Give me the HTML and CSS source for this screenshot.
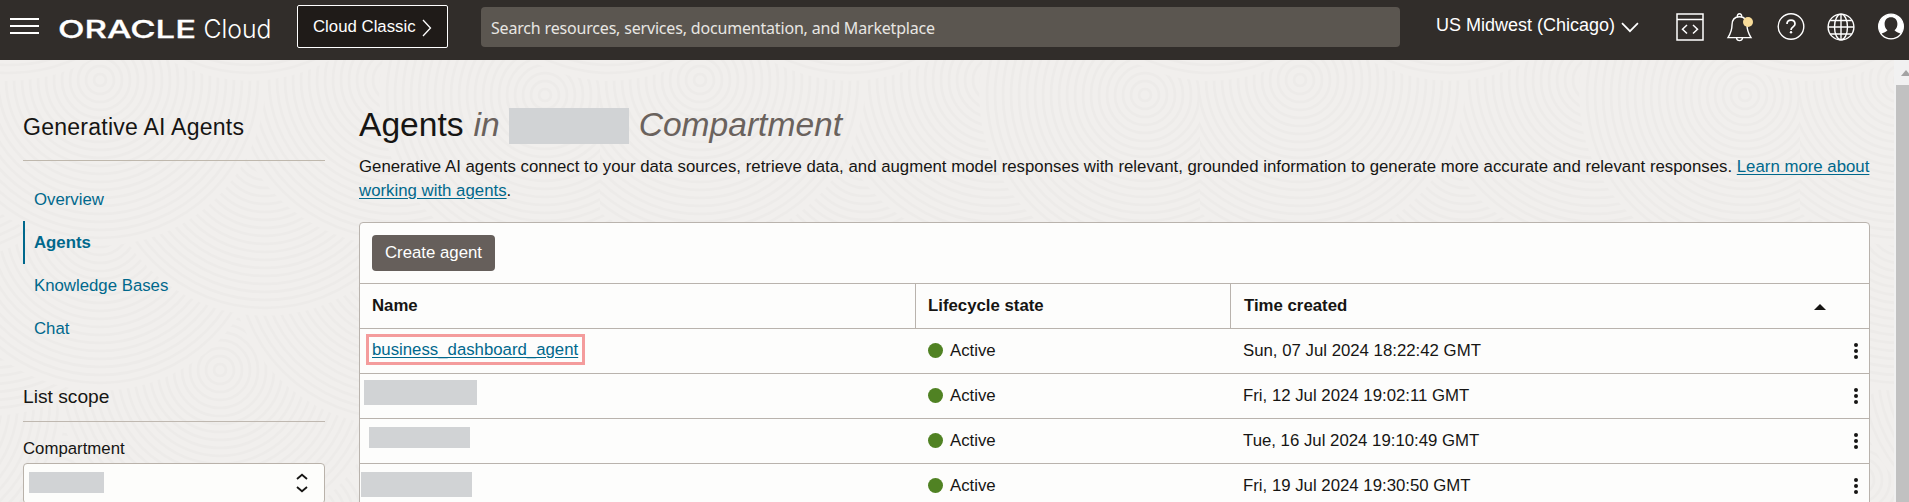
FILE: index.html
```html
<!DOCTYPE html>
<html lang="en">
<head>
<meta charset="utf-8">
<title>Generative AI Agents</title>
<link rel="stylesheet" href="styles.css">
</head>
<body>
<header class="topbar">
  <svg class="menu" width="29" height="16" viewBox="0 0 29 16"><path d="M0 1h29M0 8h29M0 15h29" stroke="#fff" stroke-width="2"/></svg>
  <svg class="logo" width="214" height="30" viewBox="0 0 214 30">
    <text class="logo-brand" x="1" y="23" textLength="138" lengthAdjust="spacingAndGlyphs">ORACLE</text>
    <text class="logo-product" x="146.500" y="23" textLength="68" lengthAdjust="spacingAndGlyphs">Cloud</text>
  </svg>
  <button class="classic">Cloud Classic
    <svg width="10" height="18" viewBox="0 0 10 18"><path d="M1 1l7.500 8L1 17" fill="none" stroke="#fff" stroke-width="1.3"/></svg>
  </button>
  <div class="search">Search resources, services, documentation, and Marketplace</div>
  <div class="region">US Midwest (Chicago)
    <svg width="18" height="11" viewBox="0 0 18 11"><path d="M1 1.200l8 8 8-8" fill="none" stroke="#fff" stroke-width="1.7"/></svg>
  </div>
  <div class="tools">
    <svg width="28" height="30" viewBox="0 0 28 30" fill="none" stroke="#fff" stroke-width="1.5"><path d="M1 2h26v26H1zM1 7.500h26M11 13l-4.500 4.200L11 21.500M17 13l4.500 4.200L17 21.500"/></svg>
    <svg width="28" height="30" viewBox="0 0 28 30" fill="none" stroke="#fff" stroke-width="1.4"><path d="M2 25.600c2.700-4.200 4-7 4-12.500C6 8 8.500 4.700 13.500 4.700S21 8 21 13.100c0 5.500 1.300 8.300 4 12.500zM11.400 4.800c-.7-4 4.900-4 4.200 0M10.500 26c.6 3.500 5.400 3.500 6 0"/><circle cx="22" cy="10" r="5" fill="#f8dc99" stroke="none"/></svg>
    <svg width="28" height="30" viewBox="0 0 28 30" fill="none" stroke="#fff" stroke-width="1.400"><circle cx="14" cy="14.500" r="12.800"/><path d="M10 12c0-5.300 8-5.300 8 0 0 3-4 2.800-4 6" stroke-width="1.700"/><circle cx="14" cy="20.300" r="1.200" fill="#fff" stroke="none"/></svg>
    <svg width="28" height="30" viewBox="0 0 28 30" fill="none" stroke="#fff" stroke-width="1.400"><circle cx="14" cy="15" r="12.900"/><ellipse cx="14" cy="15" rx="6.500" ry="12.900"/><path d="M14 2v26M1 15h26M3.200 8.500h21.600M3.200 22h21.600"/></svg>
    <svg width="28" height="30" viewBox="0 0 28 30"><circle cx="14" cy="14.500" r="12.300" fill="#fff"/><path d="M3.500 22.500c2.200-1.800 5.500-2.200 7-4.200C8.500 16.800 7.600 14.500 7.600 12c0-4 2.600-6.700 6.400-6.700s6.400 2.700 6.400 6.700c0 2.500-.9 4.800-2.900 6.300 1.500 2 4.800 2.400 7 4.200-5.600 5.300-15.400 5.300-21 0z" fill="#312d2a"/><circle cx="14" cy="14.500" r="12.400" fill="none" stroke="#fff" stroke-width="1.200"/></svg>
  </div>
</header>

<div class="page">
  <svg class="texture" width="1896" height="442">
    <defs>
      <g id="rings">
        <circle r="166" class="disc"/>
        <circle r="158"/><circle r="150"/><circle r="142"/><circle r="134"/><circle r="126"/><circle r="118"/><circle r="110"/><circle r="102"/><circle r="94"/><circle r="86"/><circle r="78"/><circle r="70"/><circle r="62"/><circle r="54"/><circle r="46"/><circle r="38"/><circle r="30"/><circle r="22"/><circle r="14"/><circle r="6"/>
      </g>
      <pattern id="swirl" width="600" height="500" patternUnits="userSpaceOnUse" class="ring-lines">
        <use href="#rings" x="60" y="420"/><use href="#rings" x="660" y="420"/>
        <use href="#rings" x="300" y="460"/>
        <use href="#rings" x="500" y="340"/><use href="#rings" x="-100" y="340"/>
        <use href="#rings" x="220" y="310"/>
        <use href="#rings" x="395" y="200"/>
        <use href="#rings" x="-10" y="190"/><use href="#rings" x="590" y="190"/>
        <use href="#rings" x="100" y="165"/>
        <use href="#rings" x="265" y="90"/>
        <use href="#rings" x="395" y="20"/>
        <use href="#rings" x="545" y="35"/><use href="#rings" x="-55" y="35"/>
        <use href="#rings" x="100" y="20"/>
        <use href="#rings" x="250" y="-145"/>
        <use href="#rings" x="10" y="-145"/><use href="#rings" x="610" y="-145"/>
      </pattern>
    </defs>
    <rect width="1896" height="442" fill="url(#swirl)"/>
  </svg>

  <aside class="sidebar">
    <h2 class="service">Generative AI Agents</h2>
    <nav class="nav">
      <a class="nav-item">Overview</a>
      <a class="nav-item nav-current">Agents</a>
      <a class="nav-item">Knowledge Bases</a>
      <a class="nav-item">Chat</a>
    </nav>
    <h3 class="scope">List scope</h3>
    <div class="label">Compartment</div>
    <div class="select">
      <span class="masked masked-select"></span>
      <svg width="12" height="20" viewBox="0 0 12 20"><path d="M1 6l5-4.300L11 6M1 14l5 4.300L11 14" fill="none" stroke="#161513" stroke-width="1.800"/></svg>
    </div>
  </aside>

  <main class="main">
    <h1 class="title"><span>Agents</span> <i>in</i> <span class="masked masked-title"></span> <i>Compartment</i></h1>
    <p class="intro">Generative AI agents connect to your data sources, retrieve data, and augment model responses with relevant, grounded information to generate more accurate and relevant responses. <a class="link">Learn more about<br>working with agents</a>.</p>
    <section class="table">
      <div class="actions"><button class="create">Create agent</button></div>
      <div class="row head">
        <div class="cell">Name</div>
        <div class="cell">Lifecycle state</div>
        <div class="cell">Time created <svg class="sort" width="12" height="6" viewBox="0 0 12 6"><path d="M0 6l6-6 6 6z" fill="#161513"/></svg></div>
      </div>
      <div class="row">
        <div class="cell"><span class="callout"><a class="link">business_dashboard_agent</a></span></div>
        <div class="cell"><span class="dot"></span>Active</div>
        <div class="cell">Sun, 07 Jul 2024 18:22:42 GMT <span class="kebab"><b></b><b></b><b></b></span></div>
      </div>
      <div class="row">
        <div class="cell"><span class="masked masked-a"></span></div>
        <div class="cell"><span class="dot"></span>Active</div>
        <div class="cell">Fri, 12 Jul 2024 19:02:11 GMT <span class="kebab"><b></b><b></b><b></b></span></div>
      </div>
      <div class="row">
        <div class="cell"><span class="masked masked-b"></span></div>
        <div class="cell"><span class="dot"></span>Active</div>
        <div class="cell">Tue, 16 Jul 2024 19:10:49 GMT <span class="kebab"><b></b><b></b><b></b></span></div>
      </div>
      <div class="row">
        <div class="cell"><span class="masked masked-c"></span></div>
        <div class="cell"><span class="dot"></span>Active</div>
        <div class="cell">Fri, 19 Jul 2024 19:30:50 GMT <span class="kebab"><b></b><b></b><b></b></span></div>
      </div>
    </section>
  </main>

  <div class="scrollbar">
    <div class="scroll-up"><svg width="10" height="6" viewBox="0 0 10 6"><path d="M0 6l5-6 5 6z" fill="#a3a3a3"/></svg></div>
    <div class="scroll-thumb"></div>
  </div>
</div>
</body>
</html>
```
FILE: styles.css
```css
* { box-sizing: border-box; }
html { height: 502px; overflow: hidden; }
body {
  margin: 0;
  height: 502px;
  overflow: hidden;
  display: flex;
  flex-direction: column;
  font: 16.8px/24px "Liberation Sans", Arial, sans-serif;
  color: #161513;
  background: #f1efed;
}
h1, h2, h3, p { margin: 0; font-weight: 400; }
button { font: inherit; color: #fff; }

.topbar {
  flex: none;
  height: 60px;
  display: flex;
  align-items: flex-start;
  padding-left: 10px;
  background: #312d2a;
  color: #fff;
  white-space: nowrap;
  overflow: hidden;
}
.topbar > *, .tools svg { flex: none; }
.menu { margin-top: 18px; }
.logo { margin: 15px 0 0 18px; fill: #fff; overflow: visible; }
.logo-brand { font: 500 24.500px Inter, sans-serif; stroke: #fff; stroke-width: .3; }
.logo-product { font: 300 25px Inter, sans-serif; }
.classic {
  display: flex;
  align-items: center;
  justify-content: space-between;
  width: 151px;
  height: 43px;
  margin: 5px 0 0 26px;
  padding: 1px 15px 0;
  border: 1px solid #fff;
  border-radius: 2px;
  background: #1f1b18;
}
.classic svg { margin-top: 1px; }
.search {
  width: 919px;
  height: 40px;
  margin: 7px 0 0 33px;
  padding-left: 10px;
  border-radius: 4px;
  background: #5b5650;
  color: #e8e6e3;
  font: 16px/43px "Noto Sans", sans-serif;
  letter-spacing: -.18px;
}
.region {
  display: flex;
  align-items: center;
  gap: 6px;
  width: 203px;
  margin: 13px 0 0 36px;
  font-size: 18px;
}
.region svg { margin-top: 5px; }
.tools { display: flex; gap: 22.300px; margin: 12px 0 0 37px; }

.page { position: relative; z-index: 0; flex: 1; min-height: 0; display: flex; overflow: hidden; }
.texture { position: absolute; top: 0; left: 0; z-index: -1; }
.ring-lines { fill: none; stroke: #edebe9; stroke-width: 2.500; }
.disc { fill: #f1efed; stroke: none; }

.sidebar { flex: none; width: 302px; margin-left: 23px; }
.service {
  height: 101px;
  padding-top: 55px;
  border-bottom: 1px solid #bfb8ad;
  font-size: 23.040px;
  letter-spacing: .24px;
}
.nav { display: flex; flex-direction: column; padding-top: 17px; }
.nav-item { height: 43px; padding-left: 11px; line-height: 43px; color: #00688c; }
.nav-current { padding-left: 9px; border-left: 2px solid #00688c; font-weight: 700; }
.scope {
  height: 72px;
  padding-top: 35px;
  border-bottom: 1px solid #bfb8b0;
  font-size: 19.200px;
}
.label { padding-top: 15px; height: 41px; }
.select {
  display: flex;
  align-items: flex-start;
  justify-content: space-between;
  height: 41px;
  padding: 8px 16px 0 5px;
  border: 1px solid #b9b2aa;
  border-radius: 4px;
  background: #fdfdfb;
}
.select svg { margin-top: 1px; }

.masked { display: inline-block; flex: none; background: #d1d3d5; }
.masked-select { width: 75px; height: 21px; }
.masked-title { width: 120px; height: 36px; }
.masked-a { width: 113px; height: 25px; margin: -7px 0 0 -8px; }
.masked-b { width: 101px; height: 21px; margin: -7px 0 0 -3px; }
.masked-c { width: 111px; height: 25px; margin: -3px 0 0 -11px; }

.main { flex: none; width: 1511px; margin-left: 34px; padding-top: 44px; }
.title {
  display: flex;
  align-items: center;
  height: 44px;
  font-size: 33.600px;
  line-height: 40px;
  padding-bottom: 2px;
}
.title i { color: #6a625d; margin-left: 10px; }
.title .masked { margin: 2px 10px 0 9px; }
.title .masked + i { margin-left: 0; }
.intro { padding-top: 7px; height: 74px; white-space: nowrap; letter-spacing: .01px; }
.link { color: #00688c; text-decoration: underline; text-underline-offset: 2px; }

.table {
  border: 1px solid #b9b3ad;
  border-radius: 4px 4px 0 0;
  background: #fdfdfc;
}
.actions { height: 60px; padding: 12px; }
.create {
  display: block;
  width: 123px;
  height: 36px;
  padding: 0;
  border: 0;
  border-radius: 4px;
  background: #665f5b;
}
.row {
  display: grid;
  grid-template-columns: 555px 315px 1fr;
  height: 45px;
  border-top: 1px solid #b9b3ad;
}
.cell { display: flex; align-items: center; padding-left: 13px; white-space: nowrap; }
.cell:first-child, .head .cell:nth-child(2) { padding-left: 12px; }
.head { font-weight: 700; }
.head .cell + .cell { border-left: 1px solid #b9b3ad; }
.sort { margin: 2px 43px 0 auto; }
.dot { width: 15px; height: 15px; margin: -1px 7px 0 0; border-radius: 50%; background: #508223; }
.callout {
  display: flex;
  align-items: center;
  width: 219px;
  height: 31px;
  margin: -3px 0 0 -6px;
  padding: 1px 0 0 3px;
  border: 3px solid #f49c9c;
}
.kebab { display: flex; flex-direction: column; gap: 2.300px; margin: 0 11px 0 auto; }
.kebab b { width: 4px; height: 4px; border-radius: 50%; background: #161513; }

.scrollbar {
  flex: none;
  width: 15px;
  margin-left: auto;
  padding-left: 2px;
  background: #f1f1f1;
}
.scroll-up { height: 25px; padding: 10px 0 0 5px; line-height: 0; overflow: hidden; }
.scroll-thumb { height: 417px; background: #c1c1c1; }
```
